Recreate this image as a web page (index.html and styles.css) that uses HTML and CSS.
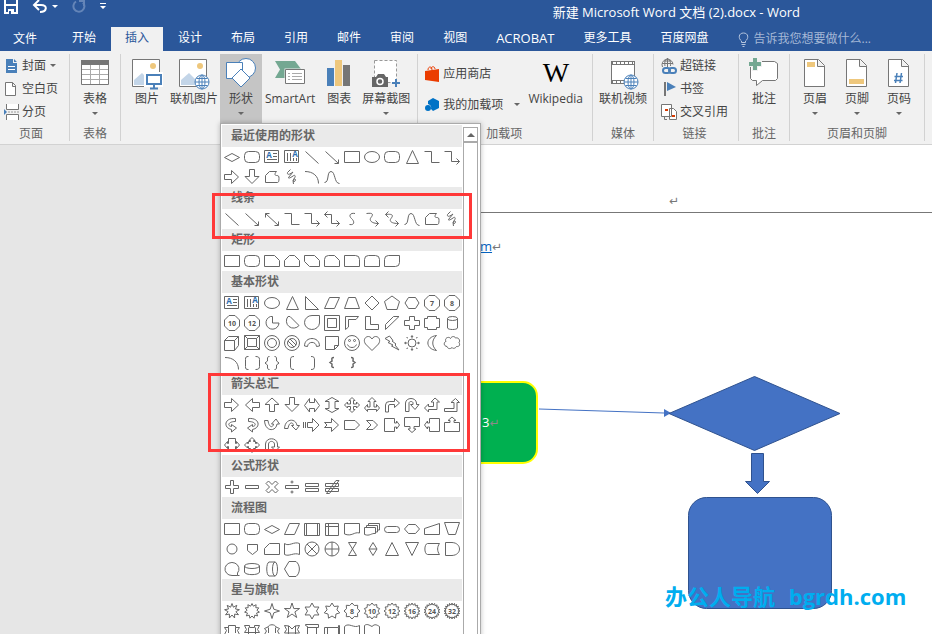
FILE: index.html
```html
<!DOCTYPE html>
<html lang="zh-CN">
<head>
  <meta charset="UTF-8" />
  <title>新建 Microsoft Word 文档 (2).docx - Word</title>
  <meta name="viewport" content="width=device-width, initial-scale=1.0" />
  <link rel="stylesheet" href="styles.css">
</head>
<body>
  <header class="titlebar">
    <div class="quick-access">
      <button class="qa-btn" aria-label="保存">
        <svg width="14" height="16" viewBox="0 0 14 16"><path d="M1 0V13H13V0M1 5H13" fill="none" stroke="#fff" stroke-width="2"/><path d="M4 9H10V14H4Z" fill="#fff"/><path d="M5 11H7V14H5Z" fill="#2b579a"/></svg>
      </button>
      <button class="qa-btn" aria-label="撤消">
        <svg width="26" height="16" viewBox="0 0 26 16"><path d="M2 5H9C16 5 15 12 8 12M7 0L2 5L7 10" fill="none" stroke="#fff" stroke-width="2"/><path d="M20 5H26L23 8Z" fill="#fff"/></svg>
      </button>
      <button class="qa-btn" aria-label="重复">
        <svg width="14" height="16" viewBox="0 0 14 16"><path d="M4 1.5A5.5 5.5 0 1 0 11 2.500M7 1H12V6" fill="none" stroke="#6485b8" stroke-width="2"/></svg>
      </button>
      <button class="qa-btn" aria-label="自定义快速访问工具栏">
        <svg width="6" height="16" viewBox="0 0 6 16"><path d="M0 3H6V4H0ZM0 6H6L3 9Z" fill="#fff"/></svg>
      </button>
    </div>
    <div class="doc-title">新建 Microsoft Word 文档 (2).docx - Word</div>
  </header>

  <nav class="tabs">
    <button class="tab file">文件</button>
    <button class="tab">开始</button>
    <button class="tab active">插入</button>
    <button class="tab">设计</button>
    <button class="tab">布局</button>
    <button class="tab">引用</button>
    <button class="tab">邮件</button>
    <button class="tab">审阅</button>
    <button class="tab">视图</button>
    <button class="tab latin">ACROBAT</button>
    <button class="tab">更多工具</button>
    <button class="tab">百度网盘</button>
    <label class="tell-me">
      <svg width="11" height="15" viewBox="0 0 11 15"><path d="M3.5 10.5V9C0 6.5 .5 1 5.5 1S11 6.5 7.5 9V10.5ZM3.5 12.5H7.5M4.5 14.5H6.5" fill="none" stroke="#b5c5de"/></svg>
      <input type="text" aria-label="操作说明搜索" placeholder="告诉我您想要做什么...">
    </label>
  </nav>

  <section class="ribbon">
    <div class="group pages">
      <div class="stack">
        <button class="small">
          <svg width="16" height="16" viewBox="0 0 16 16"><path d="M2 1H9V5H13V15H2Z M10 1L13 4H10Z" fill="#4a80b9"/><path d="M4 9L5 8L6 9L7 8L8 9L9 8L10 9L11 8M4 11.5H11" fill="none" stroke="#fff"/></svg>
          封面<i class="caret"></i>
        </button>
        <button class="small">
          <svg width="16" height="16" viewBox="0 0 16 16"><path d="M1.5 1.5H8.5L11.5 4.5V14.5H1.5ZM8.5 1.5V5.5H11.5" fill="#fff" stroke="#767676"/></svg>
          空白页
        </button>
        <button class="small">
          <svg width="16" height="16" viewBox="0 0 16 16"><path d="M2.5 0V5.5H14.5V0M2.5 16V10.5H14.5V16" fill="#fff" stroke="#767676"/><path d="M4 8H15" stroke="#999" stroke-dasharray="2 1"/><path d="M0 5L3 8L0 11Z" fill="#4a80b9"/></svg>
          分页
        </button>
      </div>
      <div class="group-name">页面</div>
    </div>

    <div class="group">
      <div class="row">
        <button class="large">
          <svg width="32" height="32" viewBox="0 0 32 32"><path d="M2.5 3.5H29.5V26.5H2.5Z" fill="#fff" stroke="#767676"/><path d="M2 2H30V7H2Z" fill="#767676"/><path d="M3 11.5H29M3 16.5H29M3 21.5H29M11.5 7V26M20.5 7V26" stroke="#aaa"/></svg>
          <span>表格</span><i class="caret"></i>
        </button>
      </div>
      <div class="group-name">表格</div>
    </div>

    <div class="group pictures">
      <div class="row">
        <button class="large">
          <svg width="32" height="32" viewBox="0 0 32 32"><path d="M1.5 1.5H28.5V28.5H1.5Z" fill="#fff" stroke="#767676"/><path d="M3 27V22L11 15L19 23V27Z" fill="#c3d5e8"/><circle cx="22" cy="8" r="3" fill="#eec77c"/><path d="M13 14H32V29H13Z" fill="#fff"/><path d="M16 17H30V26H16Z" fill="#fff" stroke="#4a80b9" stroke-width="2"/><path d="M23 27V30M19 30.5H27" stroke="#4a80b9" stroke-width="2"/></svg>
          <span>图片</span>
        </button>
        <button class="large">
          <svg width="32" height="32" viewBox="0 0 32 32"><path d="M1.5 1.5H28.5V28.5H1.5Z" fill="#fff" stroke="#767676"/><path d="M3 27V22L11 15L19 23V27Z" fill="#c3d5e8"/><circle cx="22" cy="8" r="3" fill="#eec77c"/><g fill="#fff" stroke="#4a80b9"><circle cx="24" cy="24" r="7"/><ellipse cx="24" cy="24" rx="3" ry="7"/><path d="M24 17V31M17 24H31M18.5 20.5H29.5M18.5 27.5H29.5" fill="none"/></g></svg>
          <span>联机图片</span>
        </button>
        <div class="dropdown">
          <button class="large open" aria-expanded="true">
            <svg width="32" height="32" viewBox="0 0 32 32"><g fill="#fff" stroke="#4a80b9"><circle cx="21" cy="10" r="9.5"/><path d="M1.5 4.5H17.5V20.5H1.5Z"/><path d="M16 11L25 20L16 29L7 20Z"/></g></svg>
            <span>形状</span><i class="caret"></i>
          </button>
          <div class="gallery">
            <div class="gallery-list" id="galleryList"></div>
            <div class="scrollbar">
              <button class="scroll-up" aria-label="向上滚动"></button>
              <div class="thumb"></div>
            </div>
            <div class="mark mark-lines"></div>
            <div class="mark mark-arrows"></div>
          </div>
        </div>
        <button class="large smartart">
          <svg width="32" height="32" viewBox="0 0 32 32"><path d="M1 3H21L27 11L24 16H11V20H1L6 11.5Z" fill="#74a892"/><path d="M10.500 10.500H31V27H10.500Z" fill="#f1f1f1"/><path d="M11.5 11.5H30.5V25.5H11.5Z" fill="#fff" stroke="#767676"/><path d="M14 15.5H16M18 15.5H28M14 18.5H16M18 18.5H28M14 21.5H16M18 21.5H28" stroke="#aaa"/></svg>
          <span>SmartArt</span>
        </button>
        <button class="large">
          <svg width="32" height="32" viewBox="0 0 32 32"><path d="M4 10H11V28H4Z" fill="#4a80b9"/><path d="M12 2H19V28H12Z" fill="#eec77c"/><path d="M20 7H27V28H20Z" fill="#767676"/></svg>
          <span>图表</span>
        </button>
        <button class="large">
          <svg width="32" height="32" viewBox="0 0 32 32"><path d="M4.5 2.5H26.5V24.5H4.5Z" fill="#fff" stroke="#999" stroke-dasharray="3 2"/><path d="M2 19H6L8 16H14L16 19H18V29H2Z" fill="#666"/><circle cx="10" cy="23.5" r="3" fill="#666" stroke="#fff" stroke-width="1.5"/><path d="M26 21V29M22 25H30" stroke="#4a80b9" stroke-width="2"/></svg>
          <span>屏幕截图</span><i class="caret"></i>
        </button>
      </div>
    </div>

    <div class="group addins">
      <div class="row">
        <div class="stack wide">
          <button class="small">
            <svg width="16" height="16" viewBox="0 0 16 16"><path d="M1 5L15 3V16L1 14Z" fill="#eb3c00"/><path d="M4 4C4 0 8 0 8 4M7 3C7 0 11 0 11 3" fill="none" stroke="#eb3c00"/></svg>
            应用商店
          </button>
          <button class="small">
            <svg width="16" height="16" viewBox="0 0 16 16"><path d="M4 4L9 1L15 4V11L9 14L7 12A4 4 0 0 0 4 7Z" fill="#0072c6"/><circle cx="4" cy="11" r="3" fill="#0072c6"/></svg>
            我的加载项<i class="caret far"></i>
          </button>
        </div>
        <button class="large">
          <svg width="32" height="32" viewBox="0 0 32 32"><text x="16" y="24" class="wiki">W</text></svg>
          <span>Wikipedia</span>
        </button>
      </div>
      <div class="group-name">加载项</div>
    </div>

    <div class="group media">
      <div class="row">
        <button class="large">
          <svg width="32" height="32" viewBox="0 0 32 32"><path d="M4.5 3.5H27.5V25.5H4.5Z" fill="#fff" stroke="#767676"/><path d="M4 5H28M4 24H18" stroke="#767676" stroke-width="4"/><path d="M6 5H27M6 24H17" stroke="#fff" stroke-width="2" stroke-dasharray="3 1"/><g fill="#fff" stroke="#4a80b9"><circle cx="24" cy="24" r="7"/><ellipse cx="24" cy="24" rx="3" ry="7"/><path d="M24 17V31M17 24H31M18.5 20.5H29.5M18.5 27.5H29.5" fill="none"/></g></svg>
          <span>联机视频</span>
        </button>
      </div>
      <div class="group-name">媒体</div>
    </div>

    <div class="group links">
      <div class="stack">
        <button class="small">
          <svg width="16" height="16" viewBox="0 0 16 16"><path d="M1.5 9A5.5 5.5 0 1 1 12 6.5M1 5.5H12M3 3H10M6.5 0V9M4 8C3 3 5 1 6.5 1S10 3 9.5 8" fill="none" stroke="#767676"/><g fill="none" stroke="#4a80b9" stroke-width="2"><rect x="2" y="10" width="7" height="5" rx="2.5"/><rect x="8" y="10" width="7" height="5" rx="2.5"/></g></svg>
          超链接
        </button>
        <button class="small">
          <svg width="16" height="16" viewBox="0 0 16 16"><path d="M4 1V15" stroke="#767676" stroke-width="2"/><path d="M6 1L15 6L6 10Z" fill="#4a80b9"/></svg>
          书签
        </button>
        <button class="small">
          <svg width="16" height="16" viewBox="0 0 16 16"><path d="M.5 .5H10.5V12.5H.5Z M8.5 4.5H12.5L15.5 7.5V15.5H8.5Z" fill="#fff" stroke="#767676"/><path d="M3.5 13V15.5H6" fill="none" stroke="#767676"/><path d="M4 5H7V7H4ZM11 11H14V13H11Z" fill="#d83b01"/></svg>
          交叉引用
        </button>
      </div>
      <div class="group-name">链接</div>
    </div>

    <div class="group comments">
      <div class="row">
        <button class="large">
          <svg width="32" height="32" viewBox="0 0 32 32"><path d="M5.5 3.5H26.5L29.5 5.5V20.5L27.5 22.5H14.5L8.5 27.5V22.5H4.5L2.5 20.5V6.5Z" fill="#fff" stroke="#767676"/><path d="M4 -1H10V3H14V9H10V13H4V9H0V3H4Z" fill="#f1f1f1"/><path d="M5 0H9V4H13V8H9V12H5V8H1V4H5Z" fill="#74a892"/></svg>
          <span>批注</span>
        </button>
      </div>
      <div class="group-name">批注</div>
    </div>

    <div class="group">
      <div class="row">
        <button class="large">
          <svg width="32" height="32" viewBox="0 0 32 32"><path d="M5.5 1.5H19.5L25.5 7.5V28.5H5.5ZM18.5 1.5V8.5H25.5" fill="#fff" stroke="#767676"/><path d="M8 4H16V9H8Z" fill="#eec77c"/></svg>
          <span>页眉</span><i class="caret"></i>
        </button>
        <button class="large">
          <svg width="32" height="32" viewBox="0 0 32 32"><path d="M5.5 1.5H19.5L25.5 7.5V28.5H5.5ZM18.5 1.5V8.5H25.5" fill="#fff" stroke="#767676"/><path d="M8 21H23V26H8Z" fill="#eec77c"/></svg>
          <span>页脚</span><i class="caret"></i>
        </button>
        <button class="large">
          <svg width="32" height="32" viewBox="0 0 32 32"><path d="M5.5 1.5H19.5L25.5 7.5V28.5H5.5ZM18.5 1.5V8.5H25.5" fill="#fff" stroke="#767676"/><path d="M14 15L12.5 25M18.5 15L17 25M11.5 18.5H20M11 22.5H19.5" stroke="#4a80b9" stroke-width="1.5"/></svg>
          <span>页码</span><i class="caret"></i>
        </button>
      </div>
      <div class="group-name">页眉和页脚</div>
    </div>
  </section>

  <main class="workspace">
    <article class="sheet">
      <div class="sheet-header"><span class="return">↵</span></div>
      <p class="link-line"><a href="#">m</a><span class="return">↵</span></p>
      <svg class="drawing" width="100%" height="100%">
        <rect x="200" y="237" width="117" height="81" rx="14" fill="#00b050" stroke="#ff0" stroke-width="2"/>
        <path d="M319 264L444 268" stroke="#4472c4"/>
        <path d="M444 264L451 268L444 272Z" fill="#4472c4"/>
        <g fill="#4472c4" stroke="#2f528f">
          <path d="M449 268.5L534.5 231.5L620 268.5L534.5 305.5Z"/>
          <path d="M531.5 308.5H543.5V336.5H549.5L537.5 348.5L525.5 336.5H531.5Z"/>
          <rect x="468.5" y="352.5" width="143" height="111" rx="18"/>
        </g>
      </svg>
      <div class="node-text">3<span class="return">↵</span></div>
      <div class="watermark">办公人导航 <span>bgrdh.com</span></div>
    </article>
  </main>

  <script>
  // Every shape is drawn in a 20x20 cell. A string is a path, "<..." is raw svg.
  const badge = (d, n) => `<path d="${d}"/><text x="10" y="12.5">${n}</text>`;
  const octagon = 'M7 2.5H13L17.5 7V13L13 17.5H7L2.5 13V7Z';

  // n-pointed star around the cell centre
  function star(n, outer, inner) {
    let d = '';
    for (let i = 0; i < n * 2; i++) {
      const r = i % 2 ? inner : outer;
      const a = Math.PI * i / n - Math.PI / 2;
      d += (i ? 'L' : 'M') + (10 + r * Math.cos(a)).toFixed(1) + ' ' + (10 + r * Math.sin(a)).toFixed(1);
    }
    return d + 'Z';
  }

  const shapes = {
    diamondFlat: 'M2.5 10.5L10 6.5L17.5 10.5L10 14.5Z',
    roundRect: '<rect x="2.5" y="4.5" width="15" height="11" rx="4"/>',
    textBox: '<path d="M2.5 3.5H16.5V15.5H2.5ZM11 6.5H15M11 9.5H15M5 12.5H15"/><text x="7" y="11" class="letter">A</text>',
    textBoxV: '<path d="M2.5 3.5H16.5V15.5H2.5ZM5.5 6V14M8.5 6V14M11.5 11V14M14.5 11V14"/><text x="13" y="10" class="letter">A</text>',
    line: 'M3.5 4.5L16.5 16.5',
    lineArrow: 'M3.5 4.5L16.5 16.5M12.5 16.5H16.5V12.5',
    lineDouble: 'M3.5 4.5L16.5 16.5M12.5 16.5H16.5V12.5M3.5 8.5V4.5H7.5',
    rect: 'M2.5 4.5H17.5V15.5H2.5Z',
    ellipse: '<ellipse cx="10" cy="10" rx="7.5" ry="5.5"/>',
    triangle: 'M10.5 3.5L16.5 16.5H4.5Z',
    elbow: 'M2.5 4.5H9.5V15.5H17.5',
    elbowArrow: 'M2.5 4.5H9.5V14.5H17.5M14.5 11.5L17.5 14.5L14.5 17.5',
    elbowDouble: 'M2.5 5.5H9.5V14.5H17.5M14.5 11.5L17.5 14.5L14.5 17.5M5.5 2.5L2.5 5.5L5.5 8.5',
    right: 'M2.5 7.5H9.5V3.5L16.5 10L9.5 16.5V12.5H2.5Z',
    left: 'M17.5 7.5H10.5V3.5L3.5 10L10.5 16.5V12.5H17.5Z',
    up: 'M7.5 16.5V9.5H3L10 3L17 9.5H12.5V16.5Z',
    down: 'M7.5 2.5V9.5H3L10 16.5L17 9.5H12.5V2.5Z',
    freeform: 'M3.5 15.5V8.5L7.5 4.5H14.5C12.5 6.5 12.5 8.5 14.5 8.5C16.500 8.5 17 9 17 11.5C17 14 16.500 15.5 15.5 15.5Z',
    scribble: 'M8.5 2.5L5.5 5.5C5 8 7 8 11 5L6.5 10.5C6 12 9 10.500 11 9C13 7.500 14 9 12.500 11S10.500 14.500 12 14.500S14 12.500 13 12S10.500 13.500 11.5 17',
    arc: 'M3 4.5C11 4.5 16.5 9 16.5 16.5',
    curve: 'M2.5 15.5C7.5 15.500 4.5 4.5 9 4.5C13.5 4.5 12 16.5 17.5 16.5',
    curved: 'M13 4.5C8 3.5 6.5 7 9.5 9.5S13 16.5 7.5 15.5',
    curvedArrow: 'M4.5 4.5C12 3.5 11 6 9 8.5S9 14.5 16.5 14.5M13.5 11.5L16.5 14.5L13.5 17.5',
    curvedDouble: 'M3.5 5.5C12 4.5 11 7 9 9.5S9 14.5 16.5 14.5M13.5 11.5L16.5 14.5L13.5 17.5M6.5 2.5L3.5 5.5L6.5 8.5',
    snip1: 'M2.5 4.5H12.5L17.5 9.5V15.5H2.5Z',
    snip2: 'M2.5 9.5L7.5 4.5H12.5L17.5 9.5V15.5H2.5Z',
    snipDiag: 'M2.5 4.5H12.5L17.5 9.5V15.5H7.5L2.5 10.5Z',
    snipRound: 'M2.5 15.5V8.5Q2.5 4.5 6.5 4.5H12.5L17.5 9.5V15.5Z',
    round1: 'M2.5 4.5H13.5Q17.5 4.5 17.5 8.5V15.5H2.5Z',
    round2: 'M2.5 15.5V8.5Q2.5 4.5 6.5 4.5H13.5Q17.5 4.5 17.5 8.5V15.5Z',
    roundDiag: 'M6.5 4.5H17.5V11.5Q17.5 15.5 13.5 15.5H2.5V8.5Q2.5 4.5 6.5 4.5Z',
    rightTriangle: 'M3.5 3.5V16.5H16.5Z',
    parallelogram: 'M7.5 4.5H17.5L12.5 15.5H2.5Z',
    trapezoid: 'M6.5 4.5H13.5L17.5 15.5H2.5Z',
    diamond: 'M10 3L17 10L10 17L3 10Z',
    pentagon: 'M10 3L17.5 8.5L15 16.5H5L2.5 8.5Z',
    hexagon: 'M6.5 4.5H13.5L17 10L13.5 15.5H6.5L3 10Z',
    heptagon: badge(octagon, 7),
    octagon: badge(octagon, 8),
    decagon: badge(octagon, 10),
    dodecagon: badge(octagon, 12),
    pie: 'M10.5 3.5H8.5A6.5 6.5 0 1 0 17 10H10.5Z',
    chord: 'M6 3.5A7 7 0 1 0 17 12.5L8 3.5Z',
    teardrop: 'M17.5 2.5V10A7.5 7 0 1 1 10 2.5Z',
    frame: 'M2.5 2.5H17.5V17.5H2.5ZM5.5 5.5H14.5V14.5H5.5Z',
    halfFrame: 'M3.5 3.5H16.5L14 6.5H6.5V14L3.5 16.5Z',
    corner: 'M3.5 3.5H8.5V11.5H16.5V16.5H3.5Z',
    diagStripe: 'M3.5 11.5L11.5 3.5H17L3.5 16.5Z',
    cross: 'M7.5 3.5H12.5V7.5H17.5V12.5H12.5V16.5H7.5V12.5H2.5V7.5H7.5Z',
    plaque: 'M5.5 3.5H14.5V5.5H17.5V14.5H14.5V16.5H5.5V14.5H2.5V5.5H5.5Z',
    can: '<ellipse cx="10.5" cy="5.5" rx="5" ry="2"/><path d="M5.5 5.5V15C6 17 15 17 15.5 15V5.5"/>',
    cube: 'M2.5 7.5L6.5 3.5H16.5V12.5L12.5 17.5H2.5ZM2.5 7.5H12.5V17.5M12.5 7.5L16.5 3.5',
    bevel: 'M2.5 2.5H17.5V16.5H2.5ZM5.5 5.5H14.5V13.5H5.5ZM2.5 2.5L5.5 5.5M17.5 2.5L14.5 5.5M17.5 16.5L14.5 13.5M2.5 16.5L5.5 13.5',
    donut: '<circle cx="10" cy="10" r="7.5"/><circle cx="10" cy="10" r="4.5"/>',
    noSymbol: '<circle cx="10" cy="10" r="7.5"/><circle cx="10" cy="10" r="4.5"/><path d="M6 8L12 14M8 6L14 12"/>',
    blockArc: 'M2.5 13C2.5 3 17.5 3 17.5 13L14.5 13.5C14 8 6 8 5.5 13.5Z',
    foldedCorner: 'M3.5 3.5H16.5V12.5L12.5 16.5H3.5ZM12.5 16.5V12.5H16.5',
    smiley: '<circle cx="10" cy="10" r="7.5"/><circle cx="7.5" cy="7.5" r="1"/><circle cx="12.5" cy="7.5" r="1"/><path d="M5.5 11.5C7 15.5 13 15.5 14.5 11.5"/>',
    heart: 'M10 17.5L3.5 11C-.5 5 7 .5 10 6C13 .5 20.5 5 16.5 11Z',
    lightning: 'M3 5.5L7.5 3L11 7.5L10 8L14 11L13 12L17 17L9.5 13L11 12L6 9.500L8 8.5Z',
    sun: '<circle cx="10" cy="10" r="4"/><path d="M10 2.5L11 4H9ZM10 17.5L11 16H9ZM2.5 10L4 9V11ZM17.5 10L16 9V11ZM4.5 4.5L6 5M15.5 4.5L14 5M4.5 15.5L6 15M15.5 15.5L14 15"/>',
    moon: 'M14.5 2.5C3 4 3 16 14.5 17.5C9.5 13 9.5 7 14.5 2.5Z',
    cloud: 'M5 13.5C1 13 2 8.5 4 8.5C2 5 7 3 8.5 5.5C10 2.5 13 3.5 13.5 5C17 4 18.5 8 17 9.5C18.5 12 17 14 14.5 13.5C13 16 10.5 15.5 10 14.5C8 16.5 5.5 15.5 5 13.5Z',
    bracketPair: 'M6.5 3.5C4 3.5 3.5 4 3.5 6.5V13.5C3.5 16 4 16.5 6.5 16.5M13.5 3.5C16 3.5 17.5 4 17.5 6.5V13.5C17.5 16 16 16.5 13.5 16.5',
    bracePair: 'M7.5 3.5C5 3.5 5.5 5 5.5 8L3 10L5.5 12C5.5 15 5 16.5 7.5 16.5M12.5 3.5C15 3.5 14.5 5 14.5 8L17 10L14.5 12C14.5 15 15 16.5 12.5 16.5',
    leftBracket: 'M12 3.5C9 3.5 8.5 4.5 8.5 7V13C8.5 15.5 9 16.5 12 16.5',
    rightBracket: 'M9 3.5C12 3.5 12.5 4.5 12.5 7V13C12.5 15.5 12 16.5 9 16.5',
    leftBrace: '<path d="M12 4.5C9 4.5 10 6 10 8L8 9.5L10 11C10 13 9 14.5 12 14.5" stroke-width="1.5"/>',
    rightBrace: '<path d="M9 4.5C12 4.5 11 6 11 8L13 9.5L11 11C11 13 12 14.5 9 14.5" stroke-width="1.5"/>',
    leftRight: 'M2.5 10.5L7.5 3.5V7.5H12.5V3.5L17.5 10.5L12.5 17V13.5H7.5V17Z',
    upDown: 'M10 2.5L17 6.5H13V13.5H17L10 17.5L3 13.5H7V6.5H3Z',
    quad: 'M10 2.5L13 5.5H11.5V9H14.5V7L17.5 10L14.5 13V11.5H11.5V14.5H13L10 17.5L7 14.5H8.5V11.5H5.5V13L2.5 10L5.5 7V9H8.5V5.5H7Z',
    triArrow: 'M10 2.5L14 6.5H12V12H14.5V9.5L17.5 13L14.5 16.5V14.5H5.5V16.5L2.5 13L5.5 9.5V12H8V6.5H6Z',
    bent: 'M3.5 17V10Q3.5 6.5 7.5 6.5H12.5V3.5L17.5 8L12.5 12.5V9.5H8Q6.5 9.5 6.5 11V17Z',
    uTurn: 'M3.5 16.5V8C4 2 14 2 14.5 8V9.5H17L13 14.5L8.5 9.5H11V8C11 6 7 6 7 8V16.5Z',
    leftUp: 'M2.5 13L6.5 9V11.5H11.5V7H9L13 3L17.5 7H15V14.5H6.5V17Z',
    bentUp: 'M2.5 13.5H12V7.5H9L13.5 3.5L17.5 7.5H15V16.5H2.5Z',
    curveRight: 'M13.5 3.5C2 2.5 1 13 9.5 14.5V17L14.5 13L9.5 9.5V11.5C5 11 6 6.5 13.5 6.5Z',
    curveLeft: 'M6.5 3.5C18 2.5 19 13 10.5 14.5V17L5.5 13L10.5 9.5V11.5C15 11 14 6.5 6.5 6.5Z',
    curveUp: 'M2.5 5.5C3 17 14 17 15 9H17.5L14 4L9.5 9H11.5C11 13 7 13 6 5.5Z',
    curveDown: 'M2.5 13.5C3 3 14 3 15 10.5H17.5L14 15L9.5 10.5H11.5C11 6.500 7 7 6 13.5Z',
    striped: 'M1.5 7V13M3.5 7V13M5.5 7.5H10.5V3.5L17 10L10.5 16.5V12.5H5.5Z',
    notched: 'M2.5 7.5H9.5V3.5L16.5 10L9.5 16.5V12.5H2.5L5 10Z',
    homePlate: 'M2.5 5.5H13L17.5 10L13 14.5H2.5Z',
    chevron: 'M4.5 5.5H11L15.5 10L11 14.5H4.5L9 10Z',
    callRight: 'M2.5 3.5H12.5V8H14.5V6L17.5 10L14.5 14V12H12.5V16.5H2.5Z',
    callDown: 'M2.5 2.5H17.5V11.5H12V14H14L10 17.5L6 14H8V11.5H2.5Z',
    callLeft: 'M17.5 3.5H7.5V8H5.5V6L2.5 10L5.5 14V12H7.5V16.5H17.5Z',
    callUp: 'M2.5 16.5H17.5V7.5H12V5.5H14L10 2L6 5.5H8V7.5H2.5Z',
    callLR: 'M6.5 3.5H13.5V8.5H14.5V6.5L17.5 10L14.5 13.5V11.5H13.5V16.5H6.5V11.5H5.5V13.5L2.5 10L5.5 6.5V8.5H6.5Z',
    callQuad: 'M10 2.5L13 5.5H11.5V6.5H13.5V8.5H14.5V7L17.5 10L14.5 13V11.5H13.5V13.5H11.5V14.5H13L10 17.5L7 14.5H8.5V13.5H6.5V11.5H5.5V13L2.5 10L5.5 7V8.5H6.5V6.5H8.5V5.5H7Z',
    circular: 'M3.5 14.5V9C4 2 15 2 15.5 9V12H17.5L13.5 16L9.5 12H12.5V9C12 5.5 7 5.5 6.5 9V14.5Z',
    plus: 'M8.5 3.5H11.5V8.5H16.5V11.5H11.5V16.5H8.5V11.5H3.5V8.5H8.5Z',
    minus: 'M3.5 8.5H16.5V11.5H3.5Z',
    times: 'M6.5 4L10 7.5L13.5 4L16 6.5L12.5 10L16 13.5L13.5 16L10 12.5L6.5 16L4 13.5L7.5 10L4 6.5Z',
    divide: '<path d="M3.5 8.5H16.5V11.5H3.5Z"/><circle cx="10" cy="5" r="1"/><circle cx="10" cy="15" r="1"/>',
    equal: 'M3.5 6.5H16.5V9.5H3.5ZM3.5 11.5H16.5V14.5H3.5Z',
    notEqual: 'M3.5 6.5H16.5V9.5H3.5ZM3.5 11.5H16.5V14.5H3.5ZM4.5 16.5L14 3.5H17L7.5 16.5Z',
    predefined: 'M2.5 4.5H17.5V16.5H2.5ZM4.5 4.5V16.5M15.5 4.5V16.5',
    internal: 'M3.5 4.5H16.5V16.5H3.5ZM6.5 4.5V16.5M3.5 7.5H16.5',
    doc: 'M2.5 4.5H17.5V14C12 12.5 10 18 2.5 15Z',
    multiDoc: 'M2.5 8.5H13.5V14.5C9 14 8 17.5 2.5 15.5ZM4.5 8.5V6.5H15.5V13H13.5M6.5 6.5V4.5H17.5V11H15.5',
    terminator: '<rect x="2.5" y="7.5" width="15" height="6" rx="3"/>',
    preparation: 'M6.5 5.5H13.5L17.5 10L13.5 14.5H6.5L2.5 10Z',
    manualInput: 'M2.5 9.5L17.5 4.5V15.5H2.5Z',
    manualOp: 'M2.5 3.5H17.5L13.5 15.5H6.5Z',
    connector: '<circle cx="10" cy="10" r="5"/>',
    offPage: 'M5.5 5.5H15.5V11.5L10.5 15.5L5.5 11.5Z',
    card: 'M7.5 4.5H17.5V15.5H2.5V9.5Z',
    tape: 'M2.5 4.5C7 8 12 2 17.5 4.5V15.5C12 13 7 18 2.5 15.5Z',
    sumJunction: '<circle cx="10" cy="10" r="7"/><path d="M5 5L15 15M15 5L5 15"/>',
    orNode: '<circle cx="10" cy="10" r="7"/><path d="M10 3V17M3 10H17"/>',
    collate: 'M6.5 3.5H14.5L6.5 16.5H14.5Z',
    sort: 'M11 3.5L15 10L11 16.5L7 10ZM7 10H15',
    extract: 'M10 3.5L16.5 16.5H3.5Z',
    merge: 'M3.5 3.5H16.5L10 16.5Z',
    stored: 'M5.5 4.5H17.5C15 8 15 12 17.5 15.5H5.5C2 15 2 5 5.5 4.5Z',
    delay: 'M3.5 3.5H10C20 4 20 16 10 16.5H3.5Z',
    seqAccess: 'M10 16.5A7 6.5 0 1 1 15.5 14V16.5H17.5M10 16.5H15.5',
    disk: '<ellipse cx="10" cy="7" rx="7.5" ry="2.5"/><path d="M2.5 7V13C3 16.5 17 16.5 17.5 13V7"/>',
    drum: '<ellipse cx="13" cy="10" rx="2.5" ry="7"/><path d="M13 3H7C4 4 4 16 7 17H13"/>',
    display: 'M7 2.5H14C18.5 6 18.5 14 14 17.5H7L2.5 10Z',
    burst1: star(9, 7.5, 4),
    burst2: star(11, 7.5, 5),
    star4: star(4, 7.5, 2.5),
    star5: star(5, 8, 3),
    star6: star(6, 8, 4.5),
    star7: star(7, 8, 5),
    star8: badge(star(8, 8, 6), 8),
    star10: badge(star(10, 8, 6), 10),
    star12: badge(star(12, 8, 6), 12),
    star16: badge(star(16, 8, 6), 16),
    star24: badge(star(18, 8, 6), 24),
    star32: badge(star(20, 8, 6), 32),
    ribbonUp: 'M2.5 6.5H6.5V4.5H13.5V6.5H17.5L15.5 9.5L17.5 13.5H2.5L4.5 9.5ZM6.5 6.5V12M13.5 6.5V12',
    ribbonDown: 'M2.5 4.5H7.5V6.5H12.5V4.5H17.5L15.5 8.5L17.5 11.5H2.5L4.5 8.5ZM6.5 6.5V13M13.5 6.5V13',
    ribbonCurveUp: 'M2.5 7.5L6 6C7 3 13 3 14 6L17.5 7.5L15.5 10L17.5 13.5H2.5L4.5 10ZM6.5 6.5V12M13.5 6.5V12',
    ribbonCurveDown: 'M2.5 4.5L7 5L10 8L13 5L17.5 4.5L15.5 8.5L17.5 12H2.5L4.5 8.5ZM6.5 5V13M13.5 5V13',
    scrollV: 'M5.5 15.5V5.5L3.5 4.5V3.5H16.5V6.5H5.5M14.5 6.5V15.5',
    scrollH: 'M2.5 15.5V6.5H16.5V4.5H17.5V15.5M5.5 6.5V15.5M16.5 6.5V15.5',
    wave: 'M2.5 15.5V5.5C7 1 12 8 17.5 4.5V15.5',
    doubleWave: 'M2.5 15.5V4.5C5 2.5 7 4 10 5.5C13 2.5 15 4 17.5 5.5V15.5'
  };

  const groups = [
    ['最近使用的形状', 'diamondFlat roundRect textBox textBoxV line lineArrow rect ellipse roundRect triangle elbow elbowArrow right down freeform scribble arc curve'],
    ['线条', 'line lineArrow lineDouble elbow elbowArrow elbowDouble curved curvedArrow curvedDouble curve freeform scribble'],
    ['矩形', 'rect roundRect snip1 snip2 snipDiag snipRound round1 round2 roundDiag'],
    ['基本形状', 'textBox textBoxV ellipse triangle rightTriangle parallelogram trapezoid diamond pentagon hexagon heptagon octagon decagon dodecagon pie chord teardrop frame halfFrame corner diagStripe cross plaque can cube bevel donut noSymbol blockArc foldedCorner smiley heart lightning sun moon cloud arc bracketPair bracePair leftBracket rightBracket leftBrace rightBrace'],
    ['箭头总汇', 'right left up down leftRight upDown quad triArrow bent uTurn leftUp bentUp curveRight curveLeft curveUp curveDown striped notched homePlate chevron callRight callDown callLeft callUp callLR callQuad circular'],
    ['公式形状', 'plus minus times divide equal notEqual'],
    ['流程图', 'rect roundRect diamondFlat parallelogram predefined internal doc multiDoc terminator preparation manualInput manualOp connector offPage card tape sumJunction orNode collate sort extract merge stored delay seqAccess disk drum display'],
    ['星与旗帜', 'burst1 burst2 star4 star5 star6 star7 star8 star10 star12 star16 star24 star32 ribbonUp ribbonDown ribbonCurveUp ribbonCurveDown scrollV scrollH wave doubleWave']
  ];

  document.getElementById('galleryList').innerHTML = groups.map(([title, names]) => {
    const cells = names.split(' ').map(name => {
      const s = shapes[name];
      const body = s[0] === '<' ? s : `<path d="${s}"/>`;
      return `<button class="shape" aria-label="${name}"><svg width="20" height="20" viewBox="0 0 20 20">${body}</svg></button>`;
    }).join('');
    return `<h3>${title}</h3><div class="shapes">${cells}</div>`;
  }).join('');
  </script>
</body>
</html>
```
FILE: styles.css
```css
* {
  box-sizing: border-box;
}
body {
  margin: 0;
  height: 100vh;
  display: flex;
  flex-direction: column;
  overflow: hidden;
  background: #e6e6e6;
  color: #444;
  font-family: "Open Sans", "Noto Sans CJK SC", sans-serif;
  font-size: 12px;
  line-height: 16px;
}
button {
  margin: 0;
  padding: 0;
  border: none;
  background: none;
  color: inherit;
  font: inherit;
  white-space: nowrap;
}
svg {
  display: block;
  flex: none;
}

/* title bar */
.titlebar {
  display: flex;
  justify-content: space-between;
  height: 27px;
  padding: 0 132px 0 4px;
  background: #2b579a;
  color: #fff;
}
.quick-access {
  display: flex;
  align-items: flex-start;
  gap: 14px;
}
.doc-title {
  padding-top: 4px;
  font-size: 13px;
}

/* tabs */
.tabs {
  display: flex;
  gap: 1px;
  height: 24px;
  background: #2b579a;
  color: #fff;
}
.tab {
  padding: 0 14px 2px;
}
.tab.file {
  padding: 0 13px;
  margin-right: 7px;
}
.tab.latin {
  font-size: 13px;
}
.tab.active {
  background: #f1f1f1;
  color: #2b579a;
}
.tell-me {
  display: flex;
  align-items: center;
  gap: 5px;
  flex: 1;
  padding-left: 14px;
}
.tell-me input {
  flex: 1;
  min-width: 0;
  padding: 0;
  border: none;
  outline: none;
  background: none;
  color: #fff;
  font: inherit;
}
.tell-me input::placeholder {
  color: #a5b8d6;
  opacity: 1;
}

/* ribbon */
.ribbon {
  position: relative;
  z-index: 2;
  display: flex;
  height: 94px;
  padding: 3px 0;
  background: #f1f1f1;
  border-bottom: 1px solid #d2d2d2;
}
.group {
  display: flex;
  flex-direction: column;
  justify-content: space-between;
  padding: 0 4px;
  border-right: 1px solid #d2d2d2;
}
.group-name {
  padding-bottom: 1px;
  color: #666;
  line-height: 12px;
  text-align: center;
}
.row {
  display: flex;
  gap: 1px;
}
.group:last-child .row {
  gap: 0;
}
.pages {
  padding: 0 11px 0 4px;
}
.pictures {
  padding: 0 6px 0 5px;
}
.addins {
  padding: 0 8px 0 6px;
}
.addins .row {
  gap: 7px;
}
.media {
  padding: 0 5px;
}
.links {
  padding: 0 10px 0 7px;
}
.comments {
  padding: 0 4px;
}
.large {
  display: flex;
  flex-direction: column;
  align-items: center;
  min-width: 42px;
  height: 69px;
  padding: 4px 1px 0;
}
.large span {
  margin-top: 1px;
}
.large.smartart {
  padding: 4px 2px 0;
}
.large.open {
  background: #c5c5c5;
}
.caret {
  border: 3px solid transparent;
  border-top-color: #666;
  border-bottom: none;
}
.large .caret {
  margin-top: 5px;
}
.small .caret {
  margin-left: 2px;
}
.small .caret.far {
  margin-left: 8px;
}
.stack {
  display: flex;
  flex-direction: column;
}
.stack.wide {
  padding-top: 4px;
}
.small {
  display: flex;
  align-items: center;
  gap: 3px;
  height: 23px;
}
.pages .small {
  gap: 2px;
}
.wide .small {
  height: 31px;
}
.wiki {
  font-family: "Liberation Serif", serif;
  font-size: 28px;
  text-anchor: middle;
  fill: #000;
}

/* shape gallery */
.dropdown {
  position: relative;
}
.gallery {
  position: absolute;
  top: 100%;
  left: 0;
  display: flex;
  gap: 1px;
  padding: 1px 2px 1px 1px;
  border: 1px solid #aaa;
  background: #fff;
  box-shadow: 0 0 5px rgba(0, 0, 0, 0.25);
}
.gallery h3 {
  margin: 0;
  padding-left: 9px;
  background: #eaeaea;
  color: #666;
  font-size: 12px;
  font-weight: bold;
  line-height: 22px;
}
.shapes {
  display: grid;
  grid-template-columns: repeat(12, 20px);
}
.shape svg {
  fill: none;
  stroke: #666;
}
.shape text {
  font-size: 7px;
  font-weight: bold;
  text-anchor: middle;
  fill: #555;
  stroke: none;
}
.shape .letter {
  font-size: 8px;
  fill: #2f6fb0;
}
.scrollbar {
  display: flex;
  flex-direction: column;
  width: 15px;
  padding-top: 2px;
}
.scroll-up {
  display: flex;
  align-items: center;
  justify-content: center;
  height: 15px;
  border: 1px solid #aaa;
}
.scroll-up::before {
  content: "";
  border: 4px solid transparent;
  border-top: none;
  border-bottom-color: #666;
}
.thumb {
  flex: 1;
  border: 1px solid #aaa;
}
.mark {
  position: absolute;
  border: 3px solid #ff3838;
  pointer-events: none;
}
.mark-lines {
  top: 69px;
  left: -9px;
  width: 260px;
  height: 46px;
}
.mark-arrows {
  top: 249px;
  left: -13px;
  width: 262px;
  height: 79px;
}

/* document */
.workspace {
  flex: 1;
  display: flex;
  padding-left: 220px;
}
.sheet {
  position: relative;
  flex: 1;
  background: #fff;
}
.sheet-header {
  height: 68px;
  padding: 48px 0 0 449px;
  border-bottom: 1px solid #777;
}
.return {
  color: #777;
  font-family: "DejaVu Sans", sans-serif;
  font-size: 12px;
}
.link-line {
  margin: 0;
  padding: 25px 0 0 260px;
  font-size: 13px;
}
.link-line a {
  color: #0563c1;
}
.drawing {
  position: absolute;
  top: 0;
  left: 0;
}
.node-text {
  position: absolute;
  top: 269px;
  left: 262px;
  color: #fff;
  font-size: 13px;
}
.node-text .return {
  color: #8a8a8a;
}
.watermark {
  position: absolute;
  top: 435px;
  left: 445px;
  color: #00adef;
  font-size: 22px;
  font-weight: bold;
  line-height: 32px;
  white-space: nowrap;
}
.watermark span {
  margin-left: 8px;
}
```
